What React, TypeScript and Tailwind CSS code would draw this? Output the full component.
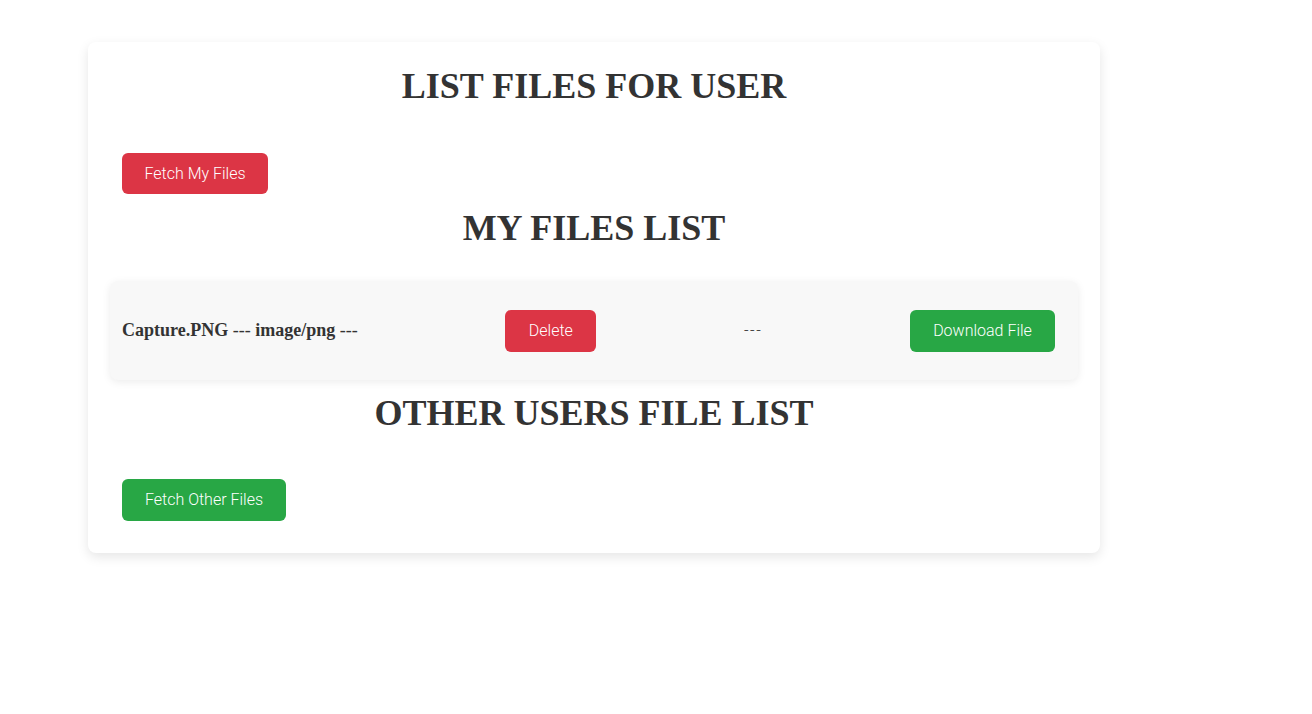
import React from 'react';

const serif = "font-['Liberation_Serif','Times_New_Roman',serif]";
const sans = "font-['Roboto','Liberation_Sans',sans-serif] font-light";

const FileRow: React.FC<{ name: string; type: string }> = ({ name, type }) => (
  <div className="flex items-center justify-between bg-[#f8f8f8] rounded-lg shadow-[0_2px_8px_rgba(0,0,0,0.08)] h-[99px] pl-3 pr-[23px]">
    <p className={`${serif} text-[18px] text-[#333]`}>
      <b>{name}</b> --- <b>{type}</b> ---
    </p>
    <button className={`${sans} bg-[#dc3545] text-white text-base rounded-md w-[91px] h-[42px]`}>Delete</button>
    <span className={`${sans} text-base text-[#333] tracking-[1.5px]`}>---</span>
    <button className={`${sans} bg-[#28a745] text-white text-base rounded-md w-[145px] h-[42px]`}>Download File</button>
  </div>
);

export default function App() {
  return (
    <div className="min-h-screen bg-white pt-[42px] pl-[88px]">
      <div className="w-[1012px] bg-white rounded-lg shadow-[0_4px_12px_rgba(0,0,0,0.1)] px-[22px] pt-[24px] pb-[32px]">
        <h1 className={`${serif} text-[36px] leading-[40px] font-bold text-[#333] text-center`}>LIST FILES FOR USER</h1>
        <button className={`${sans} mt-[47px] ml-3 bg-[#dc3545] text-white text-base rounded-md w-[146px] h-[41px]`}>Fetch My Files</button>

        <h2 className={`${serif} mt-[14px] text-[36px] leading-[40px] font-bold text-[#333] text-center`}>MY FILES LIST</h2>
        <div className="mt-[33px]">
          <FileRow name="Capture.PNG" type="image/png" />
        </div>

        <h2 className={`${serif} mt-[13px] text-[36px] leading-[40px] font-bold text-[#333] text-center`}>OTHER USERS FILE LIST</h2>
        <button className={`${sans} mt-[46px] ml-3 bg-[#28a745] text-white text-base rounded-md w-[164px] h-[42px]`}>Fetch Other Files</button>
      </div>
    </div>
  );
}
